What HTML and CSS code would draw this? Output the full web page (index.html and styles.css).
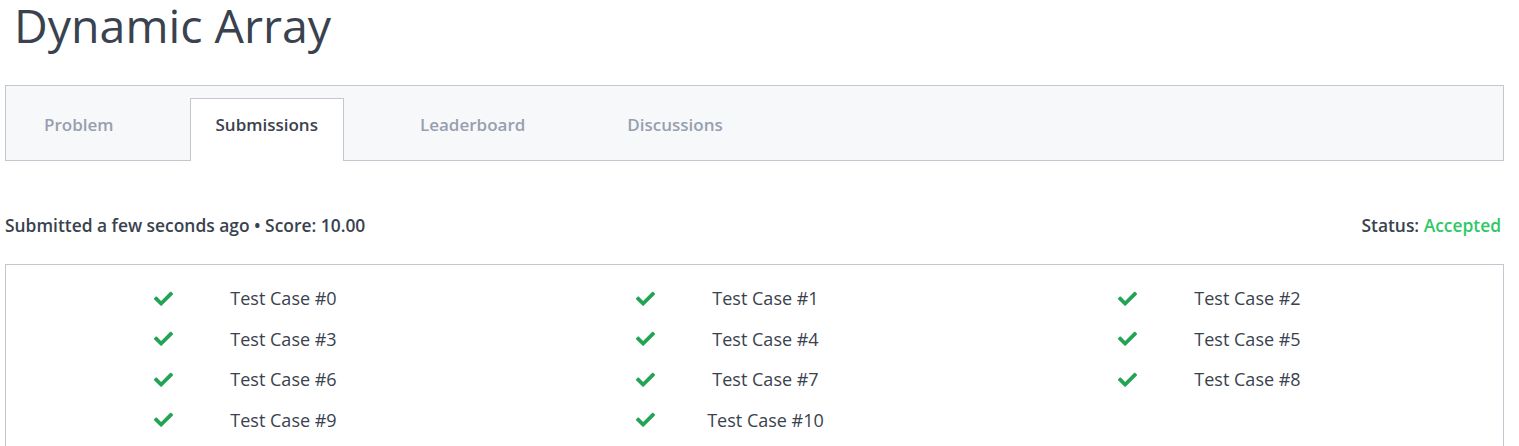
FILE: index.html
```html
<!DOCTYPE html>
<html>
<head>
<meta charset="utf-8">
<link rel="stylesheet" href="styles.css">
</head>
<body>
<div class="page">
  <h1 class="title">Dynamic Array</h1>
  <div class="tabs">
    <div class="tab">Problem</div>
    <div class="tab active">Submissions</div>
    <div class="tab">Leaderboard</div>
    <div class="tab">Discussions</div>
  </div>
  <div class="summary">
    <div class="meta">Submitted a few seconds ago • Score: 10.00</div>
    <div class="status">Status: <span class="accepted">Accepted</span></div>
  </div>
  <div class="cases">
    <div class="case"><span class="icon"><svg viewBox="0 0 512 400"><path d="M173.9 391.4l-166.4-166.4c-10-10-10-26.2 0-36.2l36.2-36.2c10-10 26.2-10 36.2 0L192 264.7 432.1 24.6c10-10 26.2-10 36.2 0l36.2 36.2c10 10 10 26.2 0 36.2l-294.4 294.4c-10 10-26.2 10-36.2 0z"/></svg></span><span class="label">Test Case #0</span></div>
    <div class="case"><span class="icon"><svg viewBox="0 0 512 400"><path d="M173.9 391.4l-166.4-166.4c-10-10-10-26.2 0-36.2l36.2-36.2c10-10 26.2-10 36.2 0L192 264.7 432.1 24.6c10-10 26.2-10 36.2 0l36.2 36.2c10 10 10 26.2 0 36.2l-294.4 294.4c-10 10-26.2 10-36.2 0z"/></svg></span><span class="label">Test Case #1</span></div>
    <div class="case"><span class="icon"><svg viewBox="0 0 512 400"><path d="M173.9 391.4l-166.4-166.4c-10-10-10-26.2 0-36.2l36.2-36.2c10-10 26.2-10 36.2 0L192 264.7 432.1 24.6c10-10 26.2-10 36.2 0l36.2 36.2c10 10 10 26.2 0 36.2l-294.4 294.4c-10 10-26.2 10-36.2 0z"/></svg></span><span class="label">Test Case #2</span></div>
    <div class="case"><span class="icon"><svg viewBox="0 0 512 400"><path d="M173.9 391.4l-166.4-166.4c-10-10-10-26.2 0-36.2l36.2-36.2c10-10 26.2-10 36.2 0L192 264.7 432.1 24.6c10-10 26.2-10 36.2 0l36.2 36.2c10 10 10 26.2 0 36.2l-294.4 294.4c-10 10-26.2 10-36.2 0z"/></svg></span><span class="label">Test Case #3</span></div>
    <div class="case"><span class="icon"><svg viewBox="0 0 512 400"><path d="M173.9 391.4l-166.4-166.4c-10-10-10-26.2 0-36.2l36.2-36.2c10-10 26.2-10 36.2 0L192 264.7 432.1 24.6c10-10 26.2-10 36.2 0l36.2 36.2c10 10 10 26.2 0 36.2l-294.4 294.4c-10 10-26.2 10-36.2 0z"/></svg></span><span class="label">Test Case #4</span></div>
    <div class="case"><span class="icon"><svg viewBox="0 0 512 400"><path d="M173.9 391.4l-166.4-166.4c-10-10-10-26.2 0-36.2l36.2-36.2c10-10 26.2-10 36.2 0L192 264.7 432.1 24.6c10-10 26.2-10 36.2 0l36.2 36.2c10 10 10 26.2 0 36.2l-294.4 294.4c-10 10-26.2 10-36.2 0z"/></svg></span><span class="label">Test Case #5</span></div>
    <div class="case"><span class="icon"><svg viewBox="0 0 512 400"><path d="M173.9 391.4l-166.4-166.4c-10-10-10-26.2 0-36.2l36.2-36.2c10-10 26.2-10 36.2 0L192 264.7 432.1 24.6c10-10 26.2-10 36.2 0l36.2 36.2c10 10 10 26.2 0 36.2l-294.4 294.4c-10 10-26.2 10-36.2 0z"/></svg></span><span class="label">Test Case #6</span></div>
    <div class="case"><span class="icon"><svg viewBox="0 0 512 400"><path d="M173.9 391.4l-166.4-166.4c-10-10-10-26.2 0-36.2l36.2-36.2c10-10 26.2-10 36.2 0L192 264.7 432.1 24.6c10-10 26.2-10 36.2 0l36.2 36.2c10 10 10 26.2 0 36.2l-294.4 294.4c-10 10-26.2 10-36.2 0z"/></svg></span><span class="label">Test Case #7</span></div>
    <div class="case"><span class="icon"><svg viewBox="0 0 512 400"><path d="M173.9 391.4l-166.4-166.4c-10-10-10-26.2 0-36.2l36.2-36.2c10-10 26.2-10 36.2 0L192 264.7 432.1 24.6c10-10 26.2-10 36.2 0l36.2 36.2c10 10 10 26.2 0 36.2l-294.4 294.4c-10 10-26.2 10-36.2 0z"/></svg></span><span class="label">Test Case #8</span></div>
    <div class="case"><span class="icon"><svg viewBox="0 0 512 400"><path d="M173.9 391.4l-166.4-166.4c-10-10-10-26.2 0-36.2l36.2-36.2c10-10 26.2-10 36.2 0L192 264.7 432.1 24.6c10-10 26.2-10 36.2 0l36.2 36.2c10 10 10 26.2 0 36.2l-294.4 294.4c-10 10-26.2 10-36.2 0z"/></svg></span><span class="label">Test Case #9</span></div>
    <div class="case"><span class="icon"><svg viewBox="0 0 512 400"><path d="M173.9 391.4l-166.4-166.4c-10-10-10-26.2 0-36.2l36.2-36.2c10-10 26.2-10 36.2 0L192 264.7 432.1 24.6c10-10 26.2-10 36.2 0l36.2 36.2c10 10 10 26.2 0 36.2l-294.4 294.4c-10 10-26.2 10-36.2 0z"/></svg></span><span class="label">Test Case #10</span></div>
  </div>
</div>
</body>
</html>
```
FILE: styles.css
```css
html, body {
  margin: 0;
  padding: 0;
  background: #fff;
}
body {
  font-family: "Open Sans", "Liberation Sans", sans-serif;
  color: #39424e;
}
.page {
  padding: 0 15px 0 5px;
}
.title {
  margin: -3px 0 0;
  padding-left: 9px;
  font-size: 46.5px;
  font-weight: 400;
  line-height: 56px;
  color: #39424e;
}
.tabs {
  margin-top: 32px;
  display: flex;
  gap: 50px;
  height: 74px;
  padding-left: 12px;
  background: #f7f8fa;
  border: 1px solid #c2c7d0;
}
.tab {
  padding: 0 25px;
  margin-top: 12px;
  height: 62px;
  line-height: 52px;
  font-size: 17px;
  font-weight: 600;
  color: #979faf;
  border: 1px solid transparent;
  border-bottom: none;
}
.tab.active {
  background: #fff;
  border-color: #c2c7d0;
  color: #39424e;
}
.summary {
  display: flex;
  justify-content: space-between;
  align-items: center;
  margin-top: 52px;
  height: 24px;
  font-size: 17.4px;
  font-weight: 600;
  color: #39424e;
  padding-right: 3px;
}
.accepted {
  color: #2ec866;
}
.cases {
  margin-top: 27px;
  border: 1px solid #c2c7d0;
  border-bottom: none;
  padding: 13px 0 20px 117px;
  display: grid;
  grid-template-columns: repeat(3, 482px);
}
.case {
  display: flex;
  align-items: center;
  height: 40.5px;
}
.icon {
  width: 80px;
  display: flex;
  justify-content: center;
}
.icon svg {
  width: 19px;
  height: 15px;
  fill: #23a455;
}
.label {
  width: 161px;
  text-align: center;
  font-size: 18px;
  color: #39424e;
}
```
